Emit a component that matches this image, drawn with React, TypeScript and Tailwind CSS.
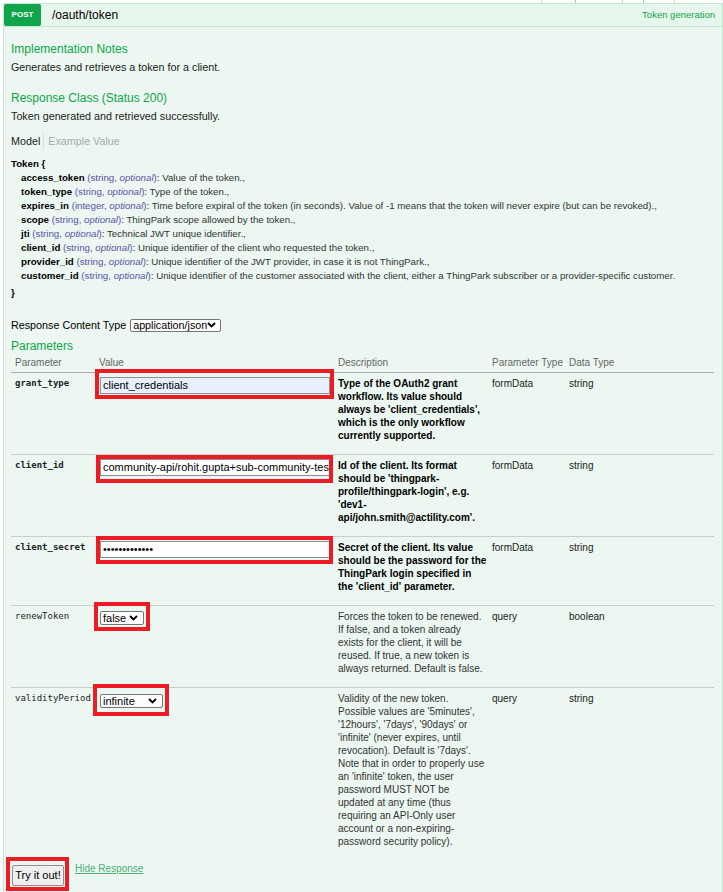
import React from "react";

type Param = {
  name: string;
  required: boolean;
  value: React.ReactNode;
  desc: string[];
  paramType: string;
  dataType: string;
};

type Prop = { name: string; type: string; desc: string };

const props: Prop[] = [
  { name: "access_token", type: "string", desc: "Value of the token.," },
  { name: "token_type", type: "string", desc: "Type of the token.," },
  {
    name: "expires_in",
    type: "integer",
    desc: "Time before expiral of the token (in seconds). Value of -1 means that the token will never expire (but can be revoked).,",
  },
  { name: "scope", type: "string", desc: "ThingPark scope allowed by the token.," },
  { name: "jti", type: "string", desc: "Technical JWT unique identifier.," },
  { name: "client_id", type: "string", desc: "Unique identifier of the client who requested the token.," },
  { name: "provider_id", type: "string", desc: "Unique identifier of the JWT provider, in case it is not ThingPark.," },
  {
    name: "customer_id",
    type: "string",
    desc: "Unique identifier of the customer associated with the client, either a ThingPark subscriber or a provider-specific customer.",
  },
];

function Chevron() {
  return (
    <svg width="9" height="6" viewBox="0 0 9 6" className="shrink-0">
      <path d="M1 1l3.5 3.5L8 1" fill="none" stroke="#000" strokeWidth="1.9" />
    </svg>
  );
}

function Marker({ className }: { className: string }) {
  // red rectangle drawn over the screenshot
  return <div className={"pointer-events-none absolute border-4 border-[#ed1c24] " + className} />;
}

function TextBox({ text, autofill }: { text: string; autofill?: boolean }) {
  return (
    <div
      className={
        "ml-[1px] w-[230px] h-[17px] border border-[#8f8f8f] px-[2px] text-[11px] leading-[15px] text-black overflow-hidden whitespace-nowrap " +
        (autofill ? "bg-[#e8f0fe]" : "bg-white")
      }
    >
      {text}
    </div>
  );
}

const params: Param[] = [
  {
    name: "grant_type",
    required: true,
    value: (
      <div className="relative mt-[4px] w-fit">
        <TextBox text="client_credentials" autofill />
        <Marker className="left-[-4px] right-[-4px] top-[-8px] bottom-[-5px]" />
      </div>
    ),
    desc: [
      "Type of the OAuth2 grant",
      "workflow. Its value should",
      "always be 'client_credentials',",
      "which is the only workflow",
      "currently supported.",
    ],
    paramType: "formData",
    dataType: "string",
  },
  {
    name: "client_id",
    required: true,
    value: (
      <div className="relative mt-[4px] w-fit">
        <TextBox text="community-api/rohit.gupta+sub-community-tes" />
        <Marker className="left-[-3px] right-[-3px] top-[-4px] bottom-[-7px]" />
      </div>
    ),
    desc: [
      "Id of the client. Its format",
      "should be 'thingpark-",
      "profile/thingpark-login', e.g.",
      "'dev1-",
      "api/john.smith@actility.com'.",
    ],
    paramType: "formData",
    dataType: "string",
  },
  {
    name: "client_secret",
    required: true,
    value: (
      <div className="relative mt-[4px] w-fit">
        <TextBox text={"\u2022".repeat(13)} />
        <Marker className="left-[-3px] right-[-3px] top-[-5px] bottom-[-6px]" />
      </div>
    ),
    desc: [
      "Secret of the client. Its value",
      "should be the password for the",
      "ThingPark login specified in",
      "the 'client_id' parameter.",
    ],
    paramType: "formData",
    dataType: "string",
  },
  {
    name: "renewToken",
    required: false,
    value: (
      <div className="relative mt-[5px] ml-[1px] w-fit">
        <div className="flex items-center justify-between w-[44px] h-[14px] border border-[#767676] rounded-[2px] bg-white pl-[2px] pr-[5px] text-[11px] leading-[12px] text-black">
          false
          <Chevron />
        </div>
        <Marker className="left-[-6px] right-[-6px] top-[-9px] bottom-[-6px]" />
      </div>
    ),
    desc: [
      "Forces the token to be renewed.",
      "If false, and a token already",
      "exists for the client, it will be",
      "reused. If true, a new token is",
      "always returned. Default is false.",
    ],
    paramType: "query",
    dataType: "boolean",
  },
  {
    name: "validityPeriod",
    required: false,
    value: (
      <div className="relative mt-[6px] ml-[1px] w-fit">
        <div className="flex items-center justify-between w-[63px] h-[14px] border border-[#767676] rounded-[2px] bg-white pl-[2px] pr-[5px] text-[11px] leading-[12px] text-black">
          infinite
          <Chevron />
        </div>
        <Marker className="left-[-7px] right-[-6px] top-[-10px] bottom-[-8px]" />
      </div>
    ),
    desc: [
      "Validity of the new token.",
      "Possible values are '5minutes',",
      "'12hours', '7days', '90days' or",
      "'infinite' (never expires, until",
      "revocation). Default is '7days'.",
      "Note that in order to properly use",
      "an 'infinite' token, the user",
      "password MUST NOT be",
      "updated at any time (thus",
      "requiring an API-Only user",
      "account or a non-expiring-",
      "password security policy).",
    ],
    paramType: "query",
    dataType: "string",
  },
];

export default function App() {
  return (
    <div className="w-[723px] h-[892px] overflow-hidden bg-white font-['Liberation_Sans',Arial,sans-serif] text-[#222]">
      {/* leftovers of the operation above */}
      <div className="flex h-[3px]">
        <div className="ml-[541px] w-px bg-[#d0d0d0]" />
        <div className="ml-[33px] w-px bg-[#a9c6e0]" />
        <div className="ml-[46px] w-px bg-[#d0d0d0]" />
        <div className="ml-[20px] w-px bg-[#a9c6e0]" />
        <div className="ml-[30px] w-px bg-[#f0c89a]" />
      </div>

      <div className="ml-[3px] w-[720px]">
        {/* heading */}
        <div className="flex items-stretch h-[24px] border border-[#c3e8d1] bg-[#e7f6ec]">
          <div className="w-[37px] rounded-[2px] bg-[#10a54a] flex items-center justify-center text-white font-bold text-[8px]">
            POST
          </div>
          <div className="ml-[11px] flex items-center text-[12px] text-black">/oauth/token</div>
          <div className="ml-auto mr-[7px] flex items-center text-[9.5px] text-[#10a54a]">Token generation</div>
        </div>

        {/* content */}
        <div className="border border-t-0 border-[#c3e8d1] bg-[#ebf7f0] pl-[7px] pr-[8px]">
          <h4 className="pt-[15px] text-[12px] leading-[15px] text-[#10a54a]">Implementation Notes</h4>
          <p className="mt-[3px] text-[10.75px] leading-[14px]">Generates and retrieves a token for a client.</p>

          <h4 className="mt-[17px] text-[12px] leading-[15px] text-[#10a54a]">Response Class (Status 200)</h4>
          <p className="mt-[3px] text-[10.75px] leading-[14px]">Token generated and retrieved successfully.</p>

          <div className="mt-[9px] flex items-center text-[10.75px] leading-[14px]">
            <span className="text-[#222]">Model</span>
            <span className="mx-[3px] h-[17px] w-px bg-[#ddd]" />
            <span className="ml-[1px] text-[#aaa]">Example Value</span>
          </div>

          <div className="mt-[8px] text-[9.7px] leading-[14px]">
            <div className="font-bold text-black">Token {"{"}</div>
            {props.map((p) => (
              <div key={p.name} className="pl-[10px] whitespace-nowrap">
                <span className="font-bold text-black">{p.name}</span>{" "}
                <span className="text-[#55a]">
                  ({p.type}, <i>optional</i>)
                </span>
                <span className="text-[#333]">: {p.desc}</span>
              </div>
            ))}
            <div className="mt-[3px] font-bold text-black">{"}"}</div>
          </div>

          <div className="mt-[18px] flex items-center text-[10.75px] leading-[14px] text-black">
            Response Content Type
            <div className="ml-[4px] flex items-center justify-between w-[91px] h-[13px] border border-[#767676] rounded-[2px] bg-white pl-[2px] pr-[4px] leading-[11px]">
              application/json
              <Chevron />
            </div>
          </div>

          <h4 className="mt-[7px] text-[12px] leading-[15px] text-[#10a54a]">Parameters</h4>

          <div className="mt-[2px] text-[10px]">
            <div className="grid grid-cols-[84px_239px_154px_77px_1fr] border-b border-[#aaa] pb-[3px] leading-[13px] text-[#666]">
              <div className="pl-[4px]">Parameter</div>
              <div className="pl-[4px]">Value</div>
              <div className="pl-[4px]">Description</div>
              <div className="pl-[4px]">Parameter Type</div>
              <div className="pl-[4px]">Data Type</div>
            </div>
            {params.map((p, i) => (
              <div
                key={p.name}
                className={
                  "grid grid-cols-[84px_239px_154px_77px_1fr] " +
                  (i < params.length - 1 ? "border-b border-[#ccc]" : "")
                }
              >
                <div
                  className={
                    "pl-[4px] pt-[4px] text-[9px] leading-[13px] text-[#222] font-['DejaVu_Sans_Mono',monospace] " +
                    (p.required ? "font-bold" : "")
                  }
                >
                  {p.name}
                </div>
                <div className="pl-[4px]">{p.value}</div>
                <div
                  className={
                    "pl-[4px] pt-[4px] pb-[12px] leading-[13px] whitespace-nowrap " +
                    (p.required ? "font-bold text-black" : "text-[#333]")
                  }
                >
                  {p.desc.map((l) => (
                    <div key={l}>{l}</div>
                  ))}
                </div>
                <div className="pl-[4px] pt-[4px] leading-[13px] text-[#222]">{p.paramType}</div>
                <div className="pl-[4px] pt-[4px] leading-[13px] text-[#222]">{p.dataType}</div>
              </div>
            ))}
          </div>

          <div className="mt-[2px] ml-[1px] flex items-start">
            <div className="relative">
              <button className="w-[52px] h-[21px] border border-[#8f8f8f] rounded-[2px] bg-[#efefef] text-[11px] text-black">
                Try it out!
              </button>
              <Marker className="left-[-6px] right-[-5px] top-[-5px] bottom-[-5px]" />
            </div>
            <a className="ml-[11px] mt-[1px] text-[10px] leading-[12px] text-[#4cb076] underline">Hide Response</a>
          </div>

          <div className="mt-[7px] h-[6px] border-t border-[#dce9c4] bg-[#f4f8ea]" />
        </div>
      </div>
    </div>
  );
}
